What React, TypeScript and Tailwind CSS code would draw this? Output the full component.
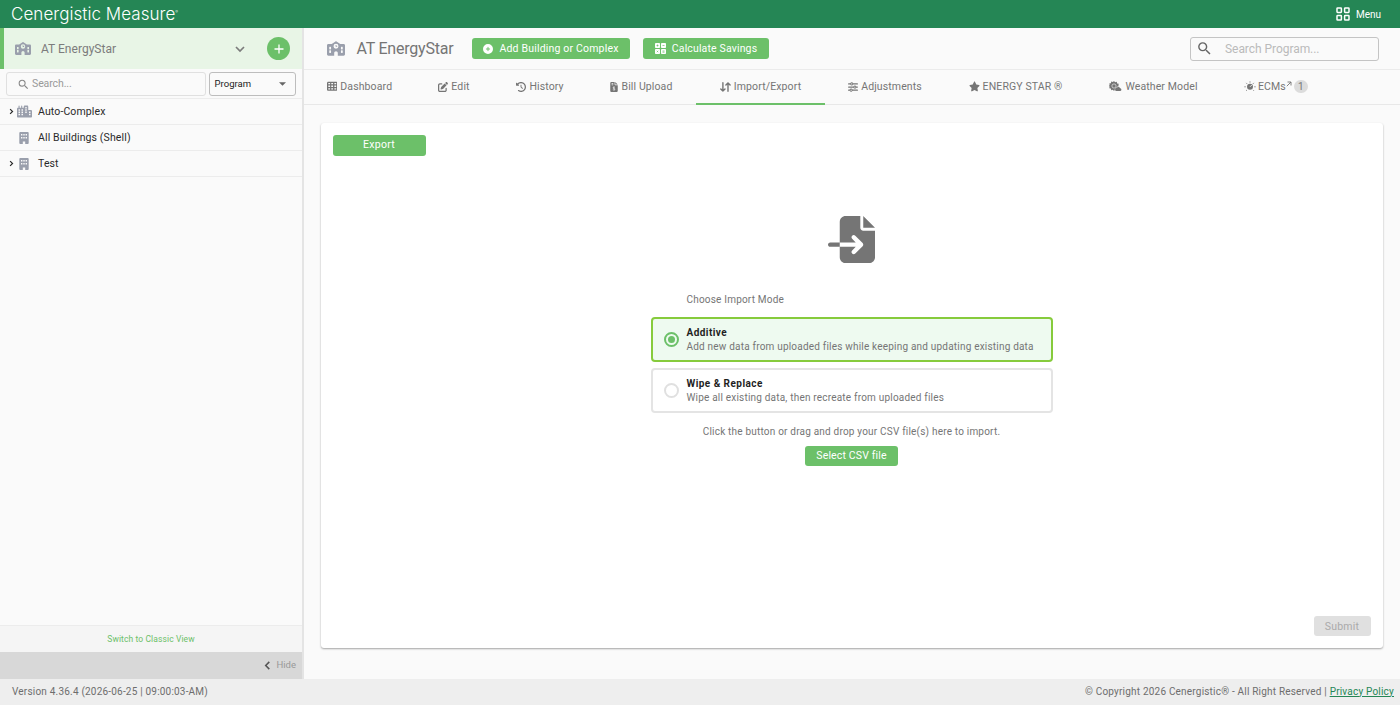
import type { ReactNode } from "react";
import { clsx } from "clsx";
import {
  FaCirclePlus,
  FaCity,
  FaClockRotateLeft,
  FaFileImport,
  FaFileInvoiceDollar,
  FaPenToSquare,
  FaSchool,
  FaSliders,
  FaStar,
  FaTableCells,
} from "react-icons/fa6";
import { MdSearch } from "react-icons/md";

function GridIcon({ className }: { className?: string }) {
  return (
    <svg viewBox="0 0 14 14" fill="none" stroke="currentColor" strokeWidth="1.5" className={className}>
      <rect x="1" y="1" width="4.4" height="4.4" rx=".6" />
      <rect x="8.6" y="1" width="4.4" height="4.4" rx=".6" />
      <rect x="1" y="8.6" width="4.4" height="4.4" rx=".6" />
      <rect x="8.6" y="8.6" width="4.4" height="4.4" rx=".6" />
    </svg>
  );
}

function CalcIcon() {
  return (
    <svg viewBox="0 0 11 11" className="size-[11px]">
      <g fill="#fff">
        <rect width="5" height="5" rx=".8" />
        <rect x="6" width="5" height="5" rx=".8" />
        <rect y="6" width="5" height="5" rx=".8" />
        <rect x="6" y="6" width="5" height="5" rx=".8" />
      </g>
      <path
        d="M1.500 2.500h2M2.500 1.500v2M7.500 2.500h2M1.800 7.800l1.400 1.400M3.200 7.800L1.800 9.200M7.500 8h2M7.500 9.200h2"
        stroke="#6cc069"
        strokeWidth=".7"
      />
    </svg>
  );
}

function BuildingIcon() {
  return (
    <svg viewBox="0 0 10 12" className="h-[12px] w-[10px]">
      <path fill="currentColor" d="M1.300 0h7.400a1 1 0 0 1 1 1v10a1 1 0 0 1-1 1H6.200V9.500H3.800V12H1.300a1 1 0 0 1-1-1V1a1 1 0 0 1 1-1z" />
      <path fill="#fafafa" d="M2 2h1.400v1.400H2zM4.300 2h1.400v1.400H4.300zM6.600 2H8v1.400H6.600zM2 5h1.400v1.400H2zM4.300 5h1.400v1.400H4.300zM6.600 5H8v1.400H6.600z" />
    </svg>
  );
}

function SwapIcon() {
  return (
    <svg viewBox="0 0 11 10" fill="none" stroke="currentColor" strokeWidth="1.4" strokeLinecap="round" strokeLinejoin="round" className="h-[10px] w-[11px]">
      <path d="M2.900.8v8.200M.8 6.900l2.100 2.200L5 6.900M8 9.200V1M5.900 3.100L8 .9l2.100 2.200" />
    </svg>
  );
}

function WeatherIcon() {
  return (
    <svg viewBox="0 0 13 11" className="h-[11px] w-[13px]">
      <path
        fill="currentColor"
        d="M5 0l1.100 1.300L7.800.8l.3 1.700 1.700.3-.5 1.600 1.100 1C8.900 5.200 7.700 5.900 7.300 7 6.300 7.100 5.700 7.900 5.700 8.900L5 10 3.900 8.700l-1.700.5-.3-1.700-1.700-.3.500-1.600L-.2 5l.9-.9-.5-1.600 1.700-.3.300-1.700 1.700.5z"
      />
      <circle cx="5" cy="5" r="2.100" fill="none" stroke="#fafafa" strokeWidth=".6" />
      <path fill="currentColor" d="M7.500 10a1.500 1.500 0 0 1 .1-3 2 2 0 0 1 3.700.3A1.400 1.400 0 0 1 11.400 10z" />
    </svg>
  );
}

function EcmIcon() {
  return (
    <svg viewBox="0 0 12 11" className="h-[11px] w-[12px]">
      <circle cx="6" cy="5.800" r="3" fill="currentColor" />
      <path d="M6 5.800L7.800 4" stroke="#fafafa" strokeWidth=".9" />
      <path
        d="M6 .4v1.200M2.200 1.900l.8.9M9.800 1.900l-.8.9M.4 5.800h1.300M10.300 5.800h1.300M2.200 9.700l.8-.8M9.800 9.700l-.8-.8"
        stroke="currentColor"
        strokeWidth=".9"
      />
    </svg>
  );
}

function Chevron({ d, className }: { d: string; className: string }) {
  return (
    <svg viewBox="0 0 10 10" fill="none" stroke="currentColor" strokeWidth="1.700" className={className}>
      <path d={d} />
    </svg>
  );
}

const tabs: { label: string; icon: ReactNode; width: string; active?: boolean }[] = [
  { label: "Dashboard", icon: <FaTableCells className="size-[10.5px]" />, width: "w-[111px]" },
  { label: "Edit", icon: <FaPenToSquare className="size-[10px]" />, width: "w-[78px]" },
  { label: "History", icon: <FaClockRotateLeft className="size-[10px]" />, width: "w-[94px]" },
  { label: "Bill Upload", icon: <FaFileInvoiceDollar className="h-[10px] w-[8px]" />, width: "w-[109px]" },
  { label: "Import/Export", icon: <SwapIcon />, width: "w-[129px]", active: true },
  { label: "Adjustments", icon: <FaSliders className="size-[10px]" />, width: "w-[120px]" },
  { label: "ENERGY STAR ®", icon: <FaStar className="size-[11px]" />, width: "w-[141px]" },
  { label: "Weather Model", icon: <WeatherIcon />, width: "w-[135px]" },
];

const tree = [
  { name: "Auto-Complex", icon: <FaCity className="h-[13px] w-[15px]" />, expandable: true },
  { name: "All Buildings (Shell)", icon: <BuildingIcon />, expandable: false },
  { name: "Test", icon: <BuildingIcon />, expandable: true },
];

const modes = [
  { title: "Additive", text: "Add new data from uploaded files while keeping and updating existing data", selected: true },
  { title: "Wipe & Replace", text: "Wipe all existing data, then recreate from uploaded files", selected: false },
];

function Sidebar() {
  return (
    <aside className="flex w-[304px] shrink-0 flex-col border-r-2 border-[#e4e4e4]">
      <div className="flex h-[41px] items-center border-l-4 border-[#6cc069] bg-[#e8f5e6] pr-3 pl-[11px] text-[#7c7c7c]">
        <FaSchool className="h-[13px] w-4 text-[#9a9fac]" />
        <span className="ml-[10px] flex-1 text-[12px] tracking-[0.02px]">AT EnergyStar</span>
        <Chevron d="M1 3l4 4 4-4" className="size-[10px]" />
        <button className="ml-[22px] flex size-[23px] items-center justify-center rounded-full bg-[#6cc069] text-white">
          <svg viewBox="0 0 10 10" stroke="currentColor" strokeWidth="1.300" className="size-[10px]">
            <path d="M5 .5v9M.5 5h9" />
          </svg>
        </button>
      </div>
      <div className="flex h-[30px] items-center gap-[3px] border-b border-[#ececec] px-[6px] pt-px">
        <div className="flex h-6 w-[201px] items-center rounded-[3px] border border-[#e0e0e0] pl-[10px] text-[#999]">
          <MdSearch className="size-[13px] text-[#888]" />
          <span className="ml-[2px] text-[10.5px] tracking-[-0.1px]">Search...</span>
        </div>
        <div className="flex h-6 w-[88px] items-center justify-between rounded-[3px] border border-[#bdbdbd] pr-[9px] pl-[5px] text-[9.5px] tracking-[0.02px] text-[#222]">
          Program
          <svg viewBox="0 0 8 4" className="h-1 w-[7px] fill-[#666]">
            <path d="M0 0h8L4 4z" />
          </svg>
        </div>
      </div>
      {tree.map((node) => (
        <div key={node.name} className="flex h-[26px] items-center border-b border-[#ececec] pl-2 text-[10.5px] tracking-[0.12px] text-[#2a2a2a]">
          <span className="w-2">
            {node.expandable && <Chevron d="M3 1.500l3.500 3.500L3 8.500" className="size-[7px]" />}
          </span>
          <span className="flex w-[16px] justify-center text-[#9a9fac]">{node.icon}</span>
          <span className="ml-[6px] pt-px">{node.name}</span>
        </div>
      ))}
      <div className="flex-1" />
      <div className="flex h-[27px] items-center justify-center border-t border-[#ececec] bg-[#f5f5f5] pt-px text-[8.5px] tracking-[0.1px] text-[#6cc069]">
        Switch to Classic View
      </div>
      <div className="flex h-[27px] items-center justify-end bg-[#d8d8d8] pr-[6px] text-[9.5px] tracking-[0.02px] text-[#999]">
        <Chevron d="M7 1L3 5l4 4" className="size-[9px] text-[#555]" />
        <span className="ml-[4px]">Hide</span>
      </div>
    </aside>
  );
}

function Toolbar() {
  return (
    <div className="flex h-[42px] items-center border-b border-[#ebebeb] pr-[21px] pl-[23px]">
      <FaSchool className="h-[15px] w-[18px] text-[#9a9fac]" />
      <h1 className="ml-[11.5px] w-[115.5px] text-[16px] tracking-[-0.22px] text-[#757575]">AT EnergyStar</h1>
      <button className="flex h-[21px] w-[158px] items-center justify-center gap-[6px] rounded-[3px] bg-[#6cc069] text-[10.5px] tracking-[0.18px] text-white">
        <FaCirclePlus className="size-[10px]" />
        Add Building or Complex
      </button>
      <button className="ml-[13px] flex h-[21px] w-[126px] items-center justify-center gap-[6px] rounded-[3px] bg-[#6cc069] text-[10.5px] tracking-[0.15px] text-white">
        <CalcIcon />
        Calculate Savings
      </button>
      <div className="ml-auto flex h-6 w-[189px] items-center rounded-[3px] border border-[#c4c4c4] pl-[5px]">
        <MdSearch className="size-[17px] text-[#666]" />
        <span className="ml-[12px] text-[12px] tracking-[-0.05px] text-[#bbb]">Search Program...</span>
      </div>
    </div>
  );
}

function TabBar() {
  return (
    <nav className="flex h-[35px] border-b border-[#e8e8e8] text-[10.5px] tracking-[0.12px] text-[#757575]">
      {tabs.map((tab) => (
        <div
          key={tab.label}
          className={clsx(
            "-mb-px flex shrink-0 items-center justify-center gap-[3px] border-b-2 whitespace-nowrap",
            tab.width,
            tab.active ? "border-[#6cc069]" : "border-transparent",
          )}
        >
          {tab.icon}
          {tab.label}
        </div>
      ))}
      <div className="-mb-px flex items-center border-b-2 border-transparent pl-[23px]">
        <EcmIcon />
        <span className="ml-[2px]">ECMs</span>
        <svg viewBox="0 0 6 6" fill="none" stroke="currentColor" strokeWidth=".9" className="mb-[6px] size-[6px]">
          <path d="M.8 5.200L5 1M1.500 1H5v3.500" />
        </svg>
        <span className="ml-[2px] flex h-[13px] w-[14px] items-center justify-center rounded-full bg-[#dcdcdc] text-[10px] tracking-normal">1</span>
      </div>
    </nav>
  );
}

function ImportPanel() {
  return (
    <section className="mt-[17.5px] ml-[16.5px] flex h-[525.5px] w-[1062px] flex-col rounded-[3px] bg-white px-3 pt-3 pb-[12px] shadow-[0_1px_2px_rgba(0,0,0,0.35)]">
      <button className="h-[21px] w-[93px] rounded-[3px] bg-[#6cc069] text-[10.5px] tracking-[0.3px] text-white">Export</button>
      <div className="mt-[60px] flex w-[402px] flex-col self-center text-[10px] leading-[14px] tracking-[0.2px] text-[#757575]">
        <FaFileImport className="size-[47px] self-center" />
        <p className="mt-[30px] ml-9">Choose Import Mode</p>
        <div className="mt-[10.5px] flex flex-col gap-[6px]">
          {modes.map((mode) => (
            <label
              key={mode.title}
              className={clsx(
                "flex h-[45px] items-center rounded-[4px] border-2 pl-[11px]",
                mode.selected ? "border-[#86cb3c] bg-[#eefaf0]" : "border-[#e4e4e4]",
              )}
            >
              <span
                className={clsx(
                  "flex size-[15px] items-center justify-center rounded-full border-2",
                  mode.selected ? "border-[#6cc069]" : "border-[#e0e0e0]",
                )}
              >
                {mode.selected && <span className="size-[7px] rounded-full bg-[#6cc069]" />}
              </span>
              <span className="ml-2 flex flex-col whitespace-nowrap">
                <b className="tracking-[0.45px] text-[#1f1f1f]">{mode.title}</b>
                {mode.text}
              </span>
            </label>
          ))}
        </div>
        <p className="mt-[12px] text-center">Click the button or drag and drop your CSV file(s) here to import.</p>
        <button className="mt-[6.5px] h-5 w-[93px] self-center rounded-[3px] bg-[#6cc069] text-[10.5px] tracking-[0.15px] text-white">Select CSV file</button>
      </div>
      <button className="mt-auto h-5 w-[57px] self-end rounded-[3px] bg-[#e0e0e0] pt-px text-[10.5px] tracking-[0.2px] text-[#aaa]">Submit</button>
    </section>
  );
}

export default function App() {
  return (
    <div className="flex h-[705px] w-[1400px] flex-col overflow-hidden bg-[#fafafa] font-['Roboto',sans-serif]">
      <header className="flex h-7 shrink-0 items-center justify-between bg-[#258655] pr-[19px] pl-[11px] text-white">
        <span className="flex items-start font-['Inter',sans-serif] text-[17px] leading-[25px] font-light tracking-[0.05px] whitespace-nowrap">
          Cenergistic Measure<span className="text-[4px] leading-[20px]">®</span>
        </span>
        <span className="flex items-center gap-[6px] text-[10px]">
          <GridIcon className="size-[14px]" />
          Menu
        </span>
      </header>
      <div className="flex min-h-0 flex-1">
        <Sidebar />
        <main className="min-w-0 flex-1">
          <Toolbar />
          <TabBar />
          <ImportPanel />
        </main>
      </div>
      <footer className="flex h-[26px] shrink-0 items-center justify-between bg-[#eee] pr-[6px] pb-[2px] pl-3 text-[10px] tracking-[0.2px] text-[#6d6d6d]">
        <span>Version 4.36.4 (2026-06-25 | 09:00:03-AM)</span>
        <span>
          © Copyright 2026 Cenergistic® - All Right Reserved |{" "}
          <a href="#" className="text-[#258655] underline">Privacy Policy</a>
        </span>
      </footer>
    </div>
  );
}
